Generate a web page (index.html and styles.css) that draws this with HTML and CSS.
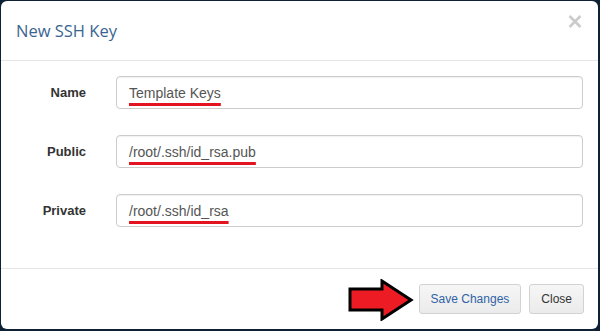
FILE: index.html
```html
<!DOCTYPE html>
<html>
<head>
<meta charset="utf-8">
<title>New SSH Key</title>
<link rel="stylesheet" href="styles.css">
</head>
<body>
<div class="modal">
	<div class="modal_header">
		<h4 class="modal_title">New SSH Key</h4>
		<span class="close_btn">
			<svg width="14" height="13" viewBox="0 0 14 13"><path d="M1.5 1 L12.5 12 M12.5 1 L1.5 12" stroke="#cbcbcb" stroke-width="2.6" fill="none"/></svg>
		</span>
	</div>
	<div class="modal_body">
		<div class="form_row">
			<label>Name</label>
			<div class="input_box"><span class="marked">Template Keys</span></div>
		</div>
		<div class="form_row">
			<label>Public</label>
			<div class="input_box"><span class="marked">/root/.ssh/id_rsa.pub</span></div>
		</div>
		<div class="form_row">
			<label>Private</label>
			<div class="input_box"><span class="marked">/root/.ssh/id_rsa</span></div>
		</div>
	</div>
	<div class="modal_footer">
		<svg class="arrow" width="66" height="42" viewBox="0 0 66 42"><polygon points="2,10 34,10 34,2 63,21 34,40 34,31 2,31" fill="#ed1c24" stroke="#000" stroke-width="3" stroke-linejoin="miter"/></svg>
		<button type="button" class="btn btn_save">Save Changes</button>
		<button type="button" class="btn">Close</button>
	</div>
</div>
</body>
</html>
```
FILE: styles.css
```css
html, body {
	margin: 0;
	height: 100%;
}
body {
	background: #0e2034;
	padding: 1px 2px 2px 1px;
	box-sizing: border-box;
	font-family: "Liberation Sans", Arial, sans-serif;
}
.modal {
	background: #fff;
	border-radius: 6px;
	height: 328px;
	display: flex;
	flex-direction: column;
}
.modal_header {
	flex-shrink: 0;
	height: 59px;
	border-bottom: 1px solid #e5e5e5;
	display: flex;
	align-items: center;
	justify-content: space-between;
	padding: 0 16px 0 15px;
}
.modal_title {
	margin: 0;
	font-family: "Open Sans", sans-serif;
	font-weight: normal;
	font-size: 16.5px;
	color: #3a6591;
}
.close_btn {
	display: flex;
	margin-top: -18px;
}
.modal_body {
	flex-shrink: 0;
	padding: 15px 15px 41px 15px;
	display: flex;
	flex-direction: column;
	gap: 26px;
}
.form_row {
	display: grid;
	grid-template-columns: 70px 1fr;
	column-gap: 30px;
	align-items: center;
}
.form_row label {
	text-align: right;
	font-weight: bold;
	font-size: 13px;
	color: #333;
}
.input_box {
	height: 31px;
	border: 1px solid #ccc;
	border-radius: 4px;
	box-shadow: inset 0 1px 1px rgba(0,0,0,.06);
	padding: 0 12px;
	display: flex;
	align-items: center;
	font-size: 14px;
	color: #555;
}
.marked {
	text-decoration: underline;
	text-decoration-color: #e3141f;
	text-decoration-thickness: 3px;
	text-underline-offset: 5px;
}
.modal_footer {
	flex-shrink: 0;
	border-top: 1px solid #e5e5e5;
	padding: 15px 14px 15px 15px;
	display: flex;
	justify-content: flex-end;
	align-items: center;
	gap: 8px;
}
.arrow {
	margin: -5px -3px -7px 0;
}
.btn {
	height: 30px;
	padding: 0 11px;
	font-family: "Liberation Sans", Arial, sans-serif;
	font-size: 12px;
	color: #333;
	background: linear-gradient(#f6f6f6, #ebebeb);
	border: 1px solid #d2d2d2;
	border-radius: 3px;
}
.btn_save {
	color: #2f62a6;
}
```
